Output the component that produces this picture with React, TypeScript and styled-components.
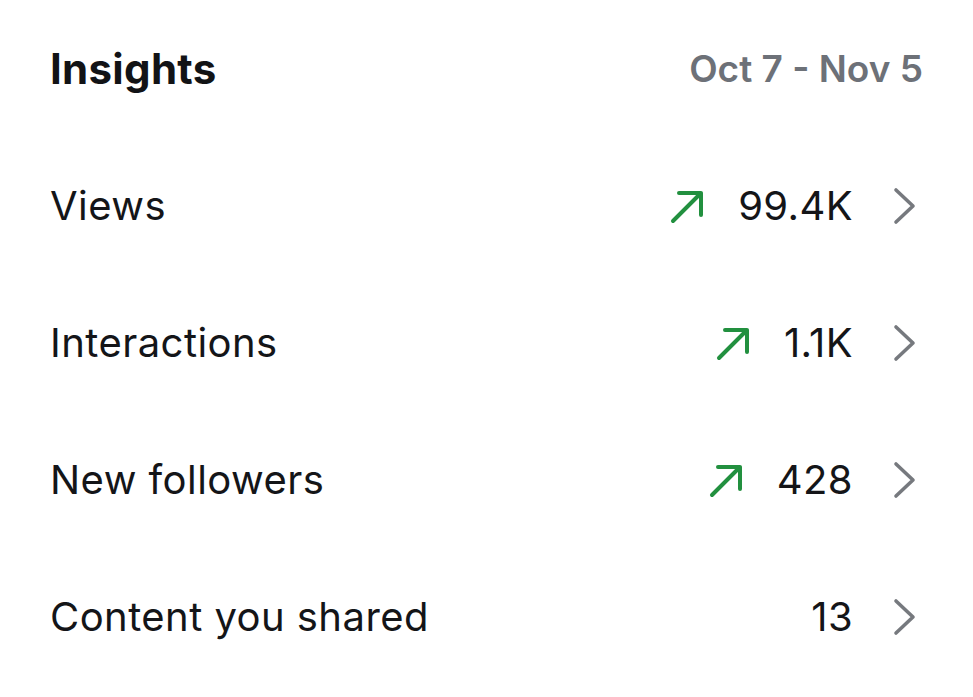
import React from 'react';
import styled, { createGlobalStyle } from 'styled-components';

const GlobalStyle = createGlobalStyle`
  html, body {
    margin: 0;
    padding: 0;
    background: #ffffff;
  }
  body {
    font-family: Inter, "Noto Sans", "Liberation Sans", sans-serif;
    -webkit-font-smoothing: antialiased;
  }
`;

const Panel = styled.div`
  width: 973px;
  height: 697px;
  box-sizing: border-box;
  padding: 34px 50px 0 50px;
  background: #ffffff;
  color: #141518;
`;

const Header = styled.div`
  display: flex;
  align-items: center;
  justify-content: space-between;
  height: 68px;
`;

const Title = styled.h1`
  margin: 0;
  font-size: 42px;
  font-weight: 700;
  letter-spacing: 0.3px;
  color: #121316;
`;

const DateRange = styled.span`
  font-size: 37px;
  font-weight: 600;
  color: #6d7178;
`;

const List = styled.div`
  display: flex;
  flex-direction: column;
  margin-top: 35px;
`;

const Row = styled.div`
  display: flex;
  align-items: center;
  justify-content: space-between;
  height: 137px;
`;

const Label = styled.span`
  font-size: 40px;
  font-weight: 400;
  letter-spacing: 0.45px;
  color: #141518;
`;

const Right = styled.div`
  display: flex;
  align-items: center;
`;

const Value = styled.span`
  font-size: 40px;
  font-weight: 400;
  letter-spacing: 0.4px;
  color: #141518;
  margin-left: 33px;
`;

const Chevron = styled.svg`
  width: 24px;
  height: 38px;
  margin-left: 40px;
  margin-right: 6px;
`;

const Arrow = styled.svg`
  width: 36px;
  height: 36px;
`;

const TrendUp = () => (
  <Arrow viewBox="0 0 36 36" fill="none">
    <path
      d="M4 33 L32 5 M10 5 H32 V27"
      stroke="#22903f"
      strokeWidth="4"
      strokeLinecap="round"
      strokeLinejoin="round"
    />
  </Arrow>
);

const ChevronRight = () => (
  <Chevron viewBox="0 0 24 38" fill="none">
    <path
      d="M3 3 L20 19 L3 35"
      stroke="#76797e"
      strokeWidth="3.6"
      strokeLinecap="round"
      strokeLinejoin="round"
    />
  </Chevron>
);

interface Metric {
  label: string;
  value: string;
  up: boolean;
}

const metrics: Metric[] = [
  { label: 'Views', value: '99.4K', up: true },
  { label: 'Interactions', value: '1.1K', up: true },
  { label: 'New followers', value: '428', up: true },
  { label: 'Content you shared', value: '13', up: false },
];

export default function App() {
  return (
    <>
      <GlobalStyle />
      <Panel>
        <Header>
          <Title>Insights</Title>
          <DateRange>Oct 7 - Nov 5</DateRange>
        </Header>
        <List>
          {metrics.map((m) => (
            <Row key={m.label}>
              <Label>{m.label}</Label>
              <Right>
                {m.up && <TrendUp />}
                <Value>{m.value}</Value>
                <ChevronRight />
              </Right>
            </Row>
          ))}
        </List>
      </Panel>
    </>
  );
}
